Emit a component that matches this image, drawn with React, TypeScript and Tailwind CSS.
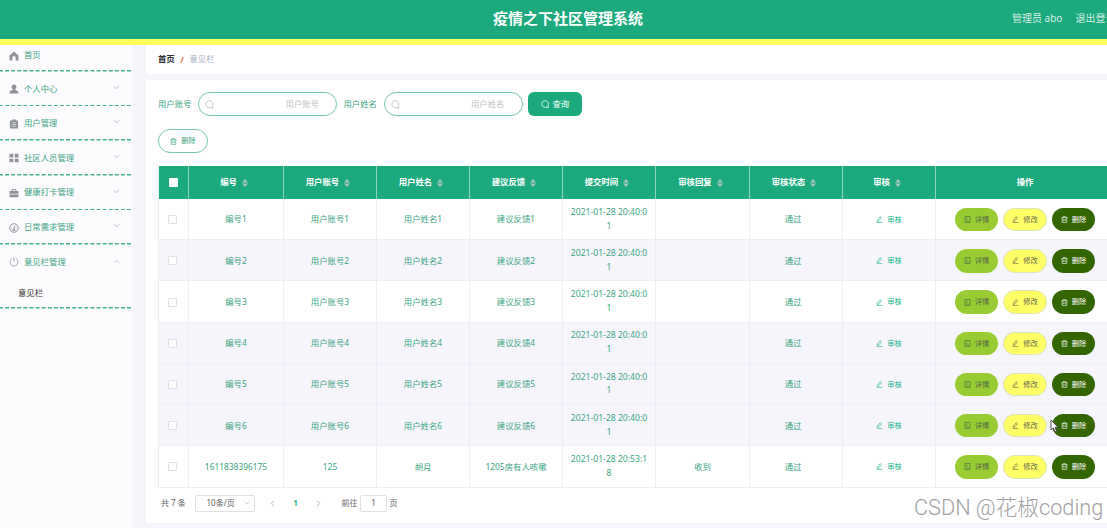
import React from "react";

type IconProps = { className?: string };

function Glyph({ className, children, width = 1.5 }: IconProps & { children: React.ReactNode; width?: number }) {
  return (
    <svg
      viewBox="0 0 16 16"
      fill="none"
      stroke="currentColor"
      strokeWidth={width}
      className={className}
    >
      {children}
    </svg>
  );
}

const SearchIcon = ({ className }: IconProps) => (
  <Glyph className={className}>
    <path d="M11.5 12.6A6.3 6.3 0 1 1 13 11l1.6 3.4h-4" />
  </Glyph>
);

const TrashIcon = ({ className }: IconProps) => (
  <Glyph className={className}>
    <path d="M1 4h14M5 4V1.5h6V4M2.8 4v10.5h10.4V4M6.3 7v4.5M9.7 7v4.5" />
  </Glyph>
);

const EditIcon = ({ className }: IconProps) => (
  <Glyph className={className}>
    <path d="M3 9.5 9.5 1.5l3 2.4L6 11.8l-3.4 1zM2 15h12.5" />
  </Glyph>
);

const DocIcon = ({ className }: IconProps) => (
  <Glyph className={className}>
    <path d="M2.2 1.2h11.6v13.6H2.2zM5 5h3M5 8.2h2M5 11.5h6" />
  </Glyph>
);

const ChevronIcon = ({ className }: IconProps) => (
  <Glyph className={className} width={2}>
    <path d="m2 5 6 6 6-6" />
  </Glyph>
);

const SortIcon = () => (
  <svg viewBox="0 0 6 8" className="h-2 w-1.5 shrink-0 fill-[#a9c5be]">
    <path d="M3 0 6 3.4H0zM3 8 0 4.6h6z" />
  </svg>
);

const menu = [
  {
    label: "首页",
    icon: <path d="M8 .8.8 7V15h4.600v-4.500a2.600 2.600 0 0 1 5.200 0V15h4.600V7z" fill="currentColor" stroke="none" />,
  },
  {
    label: "个人中心",
    icon: <path d="M8 .8a4 4 0 0 1 2 7.400v1.200c3 .3 5.100 1.800 5.300 5.600H.7C.9 11.200 3 9.700 6 9.400V8.200A4 4 0 0 1 8 .8z" fill="currentColor" stroke="none" />,
  },
  {
    label: "用户管理",
    icon: (
      <>
        <path d="M1.500 2.200h3.500V.8h6v1.400h3.500V15.200h-13z" fill="currentColor" stroke="none" />
        <path d="M4.500 6h7M4.500 8.800h7M4.500 11.600h7" stroke="#fcfbfe" strokeWidth={0.8} />
      </>
    ),
  },
  {
    label: "社区人员管理",
    icon: <path d="M.8 1.200h6v5.800h-6zM9.200 1.200h6v5.800h-6zM.8 9h6v5.800h-6zM9.200 9h6v5.800h-6z" fill="currentColor" stroke="none" />,
  },
  {
    label: "健康打卡管理",
    icon: (
      <>
        <path d="M5.200 5V2.500h5.600V5" />
        <path d="M.8 4.800h14.400v4.400H.8zM.8 10.300h14.400v4.500H.8z" fill="currentColor" stroke="none" />
      </>
    ),
  },
  {
    label: "日常需求管理",
    icon: (
      <>
        <circle cx="8" cy="8" r="6.800" />
        <path d="M10 4 8 9M4 9h1M11 9h1M5 5.500l.6.6M5.500 12.200h5" />
        <circle cx="7.700" cy="10" r="1.200" />
      </>
    ),
  },
];

const columns = ["编号", "用户账号", "用户姓名", "建议反馈", "提交时间", "审核回复", "审核状态", "审核"];

const rows = [
  ...[1, 2, 3, 4, 5, 6].map((n) => ({
    cells: [`编号${n}`, `用户账号${n}`, `用户姓名${n}`, `建议反馈${n}`],
    time: ["2021-01-28 20:40:0", "1"],
    reply: "",
    shaded: n === 2 || n >= 4,
  })),
  {
    cells: ["1611838396175", "125", "胡月", "1205房有人咳嗽"],
    time: ["2021-01-28 20:53:1", "8"],
    reply: "收到",
    shaded: false,
  },
];

const gridCols = "grid grid-cols-[30px_95px_93px_93px_93px_93px_94px_93px_93px_178px]";
const cell = "flex items-center justify-center border-r border-[#eceef5] pt-px";
const pill = "flex h-[23.5px] w-[43.5px] items-center justify-center gap-1 rounded-full text-[7.3px]";

function SearchField({ label }: { label: string }) {
  return (
    <div className="flex items-center gap-[6.500px] text-[#3ba583]">
      <span className="w-[33.5px] whitespace-nowrap">{label}</span>
      <div className="flex h-6 w-[139px] items-center justify-between rounded-full border border-[#79c8b0] pr-[17px] pl-1.5 text-[#bfc2ca]">
        <SearchIcon className="size-[9px]" />
        <span>{label}</span>
      </div>
    </div>
  );
}

function DashLine() {
  return (
    <svg className="block h-[1.6px] w-full">
      <line x1="-1" x2="132" y1="0.8" y2="0.8" stroke="#45b18e" strokeWidth="1.6" strokeDasharray="3.9 2.2" />
    </svg>
  );
}

function Sidebar() {
  return (
    <aside className="w-[132px] shrink-0 bg-[#fcfbfe] text-[#3ba583]">
      {menu.map((item, i) => (
        <div key={item.label}>
          <div className={`flex items-center px-[8.5px] ${i === 0 ? "h-[25.7px] pb-1" : "h-[33px] pt-px"}`}>
            <Glyph className="mt-px size-[10px] text-[#8f9298]">{item.icon}</Glyph>
            <span className="ml-[5.500px] flex-1">{item.label}</span>
            {i > 0 && <ChevronIcon className="mr-1 mb-[3px] size-[7px] text-[#b5b8bf]" />}
          </div>
          <DashLine />
        </div>
      ))}
      <div className="flex h-[34.5px] items-center px-[8.5px]">
        <Glyph className="size-[10px] text-[#a5a8ad]">
          <path d="M5 2.500a6.300 6.300 0 1 0 6 0M8 .8v6.500" />
        </Glyph>
        <span className="ml-[5.500px] flex-1">意见栏管理</span>
        <ChevronIcon className="mr-1 mb-0.5 size-[7px] rotate-180 text-[#b5b8bf]" />
      </div>
      <div className="flex h-7 items-center pl-[18px] text-[#303133]">意见栏</div>
      <DashLine />
    </aside>
  );
}

function DataTable() {
  return (
    <div className="w-[955px] border-l border-[#eceef5]">
      <div className={`${gridCols} h-[33px] bg-[#1ca97d] font-bold text-white`}>
        <div className="flex items-center justify-center border-r border-[#8ed3bd]">
          <span className="size-[9px] rounded-[1px] bg-white" />
        </div>
        {columns.map((name) => (
          <div key={name} className="flex items-center justify-center gap-[5px] border-r border-[#8ed3bd] pr-[4px]">
            {name}
            <SortIcon />
          </div>
        ))}
        <div className="flex items-center justify-center">操作</div>
      </div>
      {rows.map((row) => (
        <div
          key={row.cells[0]}
          className={`${gridCols} h-[41.23px] border-b border-[#eceef5] text-[#3ba583] ${row.shaded ? "bg-[#f5f5fb]" : "bg-white"}`}
        >
          <div className={cell}>
            <span className="mr-0.5 size-[9px] rounded-[1px] border border-[#dfe1e7] bg-white" />
          </div>
          {row.cells.map((text) => (
            <div key={text} className={cell}>{text}</div>
          ))}
          <div className={`${cell} flex-col text-[8.600px] leading-[13.800px]`}>
            <span className="whitespace-nowrap">{row.time[0]}</span>
            <span>{row.time[1]}</span>
          </div>
          <div className={cell}>{row.reply}</div>
          <div className={`${cell} pr-[6px]`}>通过</div>
          <div className={`${cell} gap-1 text-[7.300px] text-[#20b58a]`}>
            <EditIcon className="size-[7px]" />
            审核
          </div>
          <div className="flex items-center justify-center gap-[5px] pt-px">
            <span className={`${pill} bg-[#99cc33] text-[#56674a]`}>
              <DocIcon className="size-[7px]" />
              详情
            </span>
            <span className={`${pill} border border-[#dfe2bc] bg-[#ffff66] text-[#666650]`}>
              <EditIcon className="size-[7px]" />
              修改
            </span>
            <span className={`${pill} bg-[#336600] text-white`}>
              <TrashIcon className="size-[7px]" />
              删除
            </span>
          </div>
        </div>
      ))}
    </div>
  );
}

function Pagination() {
  return (
    <div className="mt-[7px] flex h-[17px] items-center text-[8px] text-[#606266]">
      <span className="ml-[3px] w-[33.5px]">共 7 条</span>
      <div className="flex h-[17px] w-[60px] items-center justify-between rounded-[2px] border border-[#dfe1e7] pr-1 pl-[11px]">
        10条/页
        <ChevronIcon className="size-1.5 text-[#b9bcc4]" />
      </div>
      <ChevronIcon className="ml-3.5 size-[7px] rotate-90 text-[#a9abb0]" />
      <span className="ml-[17px] w-1.5 text-center font-bold text-[#1fb388]">1</span>
      <ChevronIcon className="ml-4 size-[7px] -rotate-90 text-[#a9abb0]" />
      <span className="ml-5">前往</span>
      <div className="mx-[2.500px] flex h-[17px] w-[27px] items-center justify-center rounded-[2px] border border-[#dfe1e7]">1</div>
      <span>页</span>
    </div>
  );
}

export default function App() {
  return (
    <div className="relative flex h-[528px] w-[1107px] flex-col overflow-hidden bg-[#f5f6fb] font-['Noto_Sans','Noto_Sans_CJK_SC',sans-serif] text-[8.400px] leading-none">
      <header className="flex h-[44.5px] shrink-0 items-center border-b-[6px] border-[#ffff5c] bg-[#1ca97d] pb-[2.5px] text-white">
        <div className="w-[493px] shrink-0" />
        <h1 className="w-[519px] shrink-0 text-[15px] font-bold">疫情之下社区管理系统</h1>
        <div className="flex shrink-0 gap-[13px] text-[10px] whitespace-nowrap text-[#d5efe6]">
          <span>管理员 abo</span>
          <span>退出登录</span>
        </div>
      </header>

      <div className="flex min-h-0 flex-1">
        <Sidebar />
        <main className="ml-3.5 w-[961px] overflow-hidden">
          <div className="flex h-[29.5px] items-center bg-white pl-3">
            <span className="font-bold text-[#303133]">首页</span>
            <span className="mx-[5.5px] text-[9px] font-bold text-[#ef7550]">/</span>
            <span className="text-[#a8afc4]">意见栏</span>
          </div>

          <section className="mt-1.5 h-[443px] bg-white pt-3 pl-3">
            <div className="flex gap-[6.500px]">
              <SearchField label="用户账号" />
              <SearchField label="用户姓名" />
              <button className="-ml-px flex h-6 w-[54px] items-center justify-center gap-[3px] rounded-md bg-[#1ca97d] text-white">
                <SearchIcon className="size-[8.5px]" />
                查询
              </button>
            </div>
            <button className="mt-[13px] mb-[13px] flex h-6 w-[50px] items-center justify-center gap-1 rounded-full border border-[#79c8b0] text-[7.300px] text-[#3ba583]">
              <TrashIcon className="size-[7px]" />
              删除
            </button>
            <DataTable />
            <Pagination />
          </section>
        </main>
      </div>

      {/* mouse pointer */}
      <svg viewBox="0 0 10 16" className="absolute top-[419px] left-[1050px] h-[14px] w-[9px]">
        <path d="M1 1v11.500l2.700-2.300 2 4.500 1.800-.8-2-4.300H9z" fill="#fff" stroke="#444" />
      </svg>
      <div className="absolute top-[496px] left-[914px] font-[Roboto,'Noto_Sans_CJK_SC',sans-serif] text-[21.7px] leading-6 font-light whitespace-nowrap text-[#a2a2a4] [text-shadow:-1px_-1px_0_#fff]">
        CSDN @花椒coding
      </div>
    </div>
  );
}
